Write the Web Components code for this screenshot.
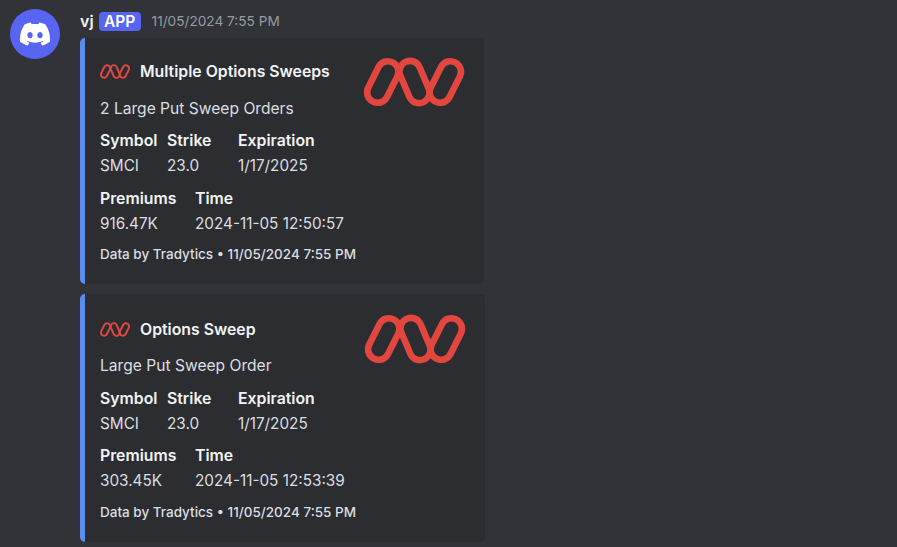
<!DOCTYPE html>
<html>
<head>
<meta charset="utf-8">
<style>
    html, body { margin: 0; height: 100%; background: #313338; overflow: hidden; }
    body { font-family: Inter, "Noto Sans", sans-serif; color: #dbdee1; }
    sweep-embed.second { --top: 24px; --logo-top: 21px; --logo-left: 280px; --desc: 14px; --row: 8px; --row2: 7px; --foot: 10px; height: 248px; width: 405px; }
</style>
</head>
<body>
<chat-message name="vj" time="11/05/2024 7:55 PM">
    <sweep-embed title="Multiple Options Sweeps" desc="2 Large Put Sweep Orders" premium="916.47K" at="2024-11-05 12:50:57"></sweep-embed>
    <sweep-embed class="second" title="Options Sweep" desc="Large Put Sweep Order" premium="303.45K" at="2024-11-05 12:53:39"></sweep-embed>
</chat-message>

<script>
(function () {
    class TradyticsLogo extends HTMLElement {
        constructor() {
            super();
            let shadowRoot = this.attachShadow({ mode: "open" });
            shadowRoot.innerHTML = `
                <style>
                    :host { display: block; width: 100px; height: 48px; }
                    svg { display: block; width: 100%; height: 100%; overflow: visible; }
                    rect { fill: none; stroke: #e2463f; stroke-width: 6.6; }
                </style>
                <svg viewBox="0 0 100 48">
                    <rect x="8.3" y="2" width="21" height="44" rx="10.5" transform="rotate(26.6 18.8 24)"/>
                    <rect x="40" y="2" width="21" height="44" rx="10.5" transform="rotate(-23 50.5 24)"/>
                    <rect x="70.8" y="2" width="21" height="44" rx="10.5" transform="rotate(26.6 81.3 24)"/>
                </svg>`;
        }
    }

    class EmbedField extends HTMLElement {
        constructor() {
            super();
            let shadowRoot = this.attachShadow({ mode: "open" });
            shadowRoot.innerHTML = `
                <style>
                    :host { display: block; line-height: 25px; }
                    b { display: block; font-size: 15.8px; font-weight: 600; color: #f2f3f5; }
                    span { display: block; font-size: 15.3px; color: #dbdee1; white-space: nowrap; }
                </style>
                <b></b><span><slot></slot></span>`;
            this._label = shadowRoot.querySelector("b");
        }
        connectedCallback() {
            this._label.textContent = this.getAttribute("label");
        }
    }

    class SweepEmbed extends HTMLElement {
        constructor() {
            super();
            let shadowRoot = this.attachShadow({ mode: "open" });
            shadowRoot.innerHTML = `
                <style>
                    :host {
                        display: block;
                        box-sizing: border-box;
                        width: 404px;
                        height: 246px;
                        padding: 0 20px 0 15px;
                        background: #2b2d31;
                        border-left: 5px solid #5b8def;
                        border-radius: 5px;
                        position: relative;
                    }
                    .author { display: flex; align-items: center; gap: 10px; padding-top: var(--top, 22px); height: 22px; }
                    .author tradytics-logo { width: 30px; height: 15px; }
                    .author strong { font-size: 15.8px; font-weight: 600; color: #f2f3f5; white-space: nowrap; }
                    .big { position: absolute; top: var(--logo-top, 20px); left: var(--logo-left, 279px); }
                    .desc { margin-top: var(--desc, 15px); font-size: 15.6px; line-height: 24px; }
                    .row { display: grid; }
                    .row.one { margin-top: var(--row, 7px); grid-template-columns: 67px 71px auto; }
                    .row.two { margin-top: var(--row2, 8px); grid-template-columns: 95px auto; }
                    .foot { margin-top: var(--foot, 9px); font-size: 13.5px; line-height: 18px; font-weight: 500; color: #dbdee1; white-space: nowrap; }
                </style>
                <div class="author"><tradytics-logo></tradytics-logo><strong></strong></div>
                <tradytics-logo class="big"></tradytics-logo>
                <div class="desc"></div>
                <div class="row one">
                    <embed-field label="Symbol">SMCI</embed-field>
                    <embed-field label="Strike">23.0</embed-field>
                    <embed-field label="Expiration">1/17/2025</embed-field>
                </div>
                <div class="row two">
                    <embed-field label="Premiums" class="premium"></embed-field>
                    <embed-field label="Time" class="at"></embed-field>
                </div>
                <div class="foot">Data by Tradytics • 11/05/2024 7:55 PM</div>`;
            this.root = shadowRoot;
        }
        connectedCallback() {
            this.root.querySelector("strong").textContent = this.getAttribute("title");
            this.root.querySelector(".desc").textContent = this.getAttribute("desc");
            this.root.querySelector(".premium").textContent = this.getAttribute("premium");
            this.root.querySelector(".at").textContent = this.getAttribute("at");
        }
    }

    class ChatMessage extends HTMLElement {
        constructor() {
            super();
            let shadowRoot = this.attachShadow({ mode: "open" });
            shadowRoot.innerHTML = `
                <style>
                    :host { display: flex; gap: 20px; padding: 9px 0 0 10px; }
                    .avatar {
                        flex: none; width: 50px; height: 50px; border-radius: 50%;
                        background: #5865f2; display: flex; align-items: center; justify-content: center;
                    }
                    .avatar svg { width: 30px; height: 30px; fill: #fff; }
                    .head { display: flex; align-items: center; height: 24px; margin-bottom: 5px; gap: 5px; }
                    .name { font-size: 16px; font-weight: 600; color: #f2f3f5; }
                    .tag {
                        background: #5865f2; color: #fff; font-size: 15.5px; font-weight: 600; line-height: 19px;
                        width: 42px; text-align: center; border-radius: 4px;
                    }
                    .time { margin-left: 6px; font-size: 13.65px; color: #949ba4; }
                    .embeds { display: flex; flex-direction: column; gap: 10px; }
                </style>
                <div class="avatar">
                    <svg viewBox="0 0 24 24"><path d="M20.317 4.3698a19.7913 19.7913 0 00-4.8851-1.5152.0741.0741 0 00-.0785.0371c-.211.3753-.4447.8648-.6083 1.2495-1.8447-.2762-3.68-.2762-5.4868 0-.1636-.3933-.4058-.8742-.6177-1.2495a.077.077 0 00-.0785-.037 19.7363 19.7363 0 00-4.8852 1.515.0699.0699 0 00-.0321.0277C.5334 9.0458-.319 13.5799.0992 18.0578a.0824.0824 0 00.0312.0561c2.0528 1.5076 4.0413 2.4228 5.9929 3.0294a.0777.0777 0 00.0842-.0276c.4616-.6304.8731-1.2952 1.226-1.9942a.076.076 0 00-.0416-.1057c-.6528-.2476-1.2743-.5495-1.8722-.8923a.077.077 0 01-.0076-.1277c.1258-.0943.2517-.1923.3718-.2914a.0743.0743 0 01.0776-.0105c3.9278 1.7933 8.18 1.7933 12.0614 0a.0739.0739 0 01.0785.0095c.1202.099.246.1981.3728.2924a.077.077 0 01-.0066.1276 12.2986 12.2986 0 01-1.873.8914.0766.0766 0 00-.0407.1067c.3604.698.7719 1.3628 1.225 1.9932a.076.076 0 00.0842.0286c1.961-.6067 3.9495-1.5219 6.0023-3.0294a.077.077 0 00.0313-.0552c.5004-5.177-.8382-9.6739-3.5485-13.6604a.061.061 0 00-.0312-.0286zM8.02 15.3312c-1.1825 0-2.1569-1.0857-2.1569-2.419 0-1.3332.9555-2.4189 2.157-2.4189 1.2108 0 2.1757 1.0952 2.1568 2.419 0 1.3332-.9555 2.4189-2.1569 2.4189zm7.9748 0c-1.1825 0-2.1569-1.0857-2.1569-2.419 0-1.3332.9554-2.4189 2.1569-2.4189 1.2108 0 2.1757 1.0952 2.1568 2.419 0 1.3332-.946 2.4189-2.1568 2.4189Z"/></svg>
                </div>
                <div>
                    <div class="head">
                        <span class="name"></span><span class="tag">APP</span><span class="time"></span>
                    </div>
                    <div class="embeds"><slot></slot></div>
                </div>`;
            this.root = shadowRoot;
        }
        connectedCallback() {
            this.root.querySelector(".name").textContent = this.getAttribute("name");
            this.root.querySelector(".time").textContent = this.getAttribute("time");
        }
    }

    customElements.define("tradytics-logo", TradyticsLogo);
    customElements.define("embed-field", EmbedField);
    customElements.define("sweep-embed", SweepEmbed);
    customElements.define("chat-message", ChatMessage);
})();
</script>
</body>
</html>
